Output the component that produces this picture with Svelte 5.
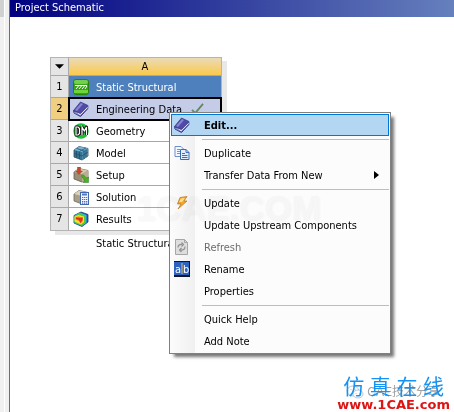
<script lang="ts">
  type Cell = { name: string; icon: string };
  type Entry = { label: string; icon?: string; disabled?: boolean; submenu?: boolean; active?: boolean };

  const cells: Cell[] = [
    { name: 'Static Structural', icon: 'static' },
    { name: 'Engineering Data', icon: 'book' },
    { name: 'Geometry', icon: 'dm' },
    { name: 'Model', icon: 'model' },
    { name: 'Setup', icon: 'setup' },
    { name: 'Solution', icon: 'solution' },
    { name: 'Results', icon: 'results' },
  ];

  const groups: Entry[][] = [
    [{ label: 'Edit...', icon: 'book', active: true }],
    [{ label: 'Duplicate', icon: 'copy' }, { label: 'Transfer Data From New', submenu: true }],
    [
      { label: 'Update', icon: 'bolt' },
      { label: 'Update Upstream Components' },
      { label: 'Refresh', icon: 'refresh', disabled: true },
      { label: 'Rename', icon: 'rename' },
      { label: 'Properties' },
    ],
    [{ label: 'Quick Help' }, { label: 'Add Note' }],
  ];

  let selected = $state(1);
</script>

{#snippet cube(top: string, left: string, right: string, edge: string)}
  <path d="M1 5 6 1.500 15 3.500 15 11 9 15 1 12z" fill={left} stroke={edge} stroke-width=".8" />
  <path d="M1 5 6 1.500 15 3.500 9 7z" fill={top} />
  <path d="M9 7 15 3.500 15 11 9 15z" fill={right} />
{/snippet}

{#snippet icon(name: string)}
  <svg class="icon" viewBox="0 0 16 16" aria-hidden="true">
    {#if name === 'static'}
      <rect x=".5" y=".5" width="15" height="15" rx="2.500" fill="#36a318" stroke="#26830f" />
      <rect x="1" y="1" width="14" height="4" rx="2" fill="#74cf4e" />
      <rect x="1" y="11" width="14" height="3" fill="#6fd43a" />
      <path d="M2 6.500h12" stroke="#fff" />
      <path d="M5.500 7 3 10M8.500 7 6 10M11.500 7 9 10M14 7 12 10" stroke="#fff" fill="none" />
    {:else if name === 'book'}
      <path d="M1 10 7 15 15 7 15 5 7 12z" fill="#dcdff0" stroke="#4a4793" stroke-width=".7" />
      <path d="M.5 9.500 7.500 1 15 4.500 7.500 12.500z" fill="#504ba8" stroke="#36318a" stroke-width=".7" />
      <path d="M2 9 8 2 10 3 4 10z" fill="#8986d0" />
      <path d="M.5 9.500 1 12 7.500 15.500 15 7.500" fill="none" stroke="#39358a" />
    {:else if name === 'dm'}
      <circle cx="8" cy="8" r="7.700" fill="#20bd3a" />
      <path d="M3 4h2l1.500 1.500v5L5 12H3zM9 12V4l2.300 4L13.500 4v8" fill="none" stroke="#111" stroke-width="3" stroke-linejoin="round" />
      <path d="M3 4h2l1.500 1.500v5L5 12H3zM9 12V4l2.300 4L13.500 4v8" fill="none" stroke="#fff" stroke-width="1.200" />
    {:else if name === 'model'}
      {@render cube('#77b4d2', '#37718f', '#4c8cac', '#244f68')}
      <path d="M1 8.500 9 11 15 7M3.500 6v7M6.500 6.500V14M11 6v8M13 4.500V12M3.500 3.500 11.500 6M7 6 13 3" fill="none" stroke="#204a63" stroke-width=".7" />
    {:else if name === 'setup'}
      {@render cube('#d5ccb0', '#988f76', '#b9ae8f', '#655e4d')}
      <path d="M4.500 0h3v4h2L6 7.500 2.500 4h2z" fill="#c9482b" stroke="#8e3524" stroke-width=".4" />
      <path d="m8.500 9 1.500-1.500 3.500 3.500 2-1v5.500H10l1.500-2z" fill="#4fae27" stroke="#267416" stroke-width=".5" />
    {:else if name === 'solution'}
      {@render cube('#d9d2b9', '#a79f87', '#b9ae8f', '#706b5a')}
      <rect x="7.500" y="3.500" width="8" height="12" fill="#f2f5ff" stroke="#4268ad" />
      <path d="M9 5.500h5" stroke="#5379bf" stroke-width="2" />
      <path d="M9 8.500h5.500M9 10.500h5.500M9 12.500h5.500M9 14.200h5.500" stroke="#4871b8" stroke-width="1.200" stroke-dasharray="1.300 .7" />
    {:else if name === 'results'}
      <path d="M1 4.500 8 1 15 3.500V11l-6 4.500L1 12z" fill="#254fd0" stroke="#243c66" stroke-width=".8" />
      <path d="M1.500 4.500 7 1.500 13.500 4v7.500L9 15l-7.500-3z" fill="#24c3c6" />
      <path d="M1.500 5 6 2.500 12 4.500v7.500L8.500 14.500l-7-3z" fill="#4fcf35" />
      <path d="M1.500 5.500 5.500 4 11 5.500V11l-3 2.500-6.500-3z" fill="#f6e225" />
      <path d="M2.500 6 6 5.500l4 1v3.500L7.500 12.500 6 10 2.500 8.500z" fill="#f0801f" />
      <path d="M3 6.500 7 7l2.500-.5v2L7.500 12 6 9 3 8z" fill="#e0301c" />
    {:else if name === 'copy'}
      <path d="M1 1.500h6l2.500 2.500v7.500H1z" fill="#f5f8ff" stroke="#6d91c9" />
      <path d="M3 4.500h3M3 6.500h4M3 8.500h4" stroke="#6c94cf" />
      <path d="M6.500 4.500h5.500l3 3v7H6.500z" fill="#e2edff" stroke="#3c68ac" />
      <path d="M12 4.500v3h3M8 8.500h3M8 10.500h5.500M8 12.500h5.500" fill="none" stroke="#3c70bd" />
    {:else if name === 'bolt'}
      <path d="M6 2.500 13 1.500 10 6h3L4 14l3-5H3.500z" fill="#f6a623" stroke="#ba7424" stroke-width=".7" />
      <path d="M7 3.500 11 3 8 7H5z" fill="#ffe18a" />
    {:else if name === 'refresh'}
      <path d="M1.500.5h9l3 3v12h-12z" fill="#dedede" stroke="#a6a6a6" />
      <path d="M10.500.5v3h3" fill="none" stroke="#a6a6a6" />
      <path d="M4 8.500C4 6 6 5 8.500 5.500M7.500 3.500l2 2-2 2M11 7.500c0 3-2 4-4.500 3.500M7.500 9l-2 2 2 2" fill="none" stroke="#929292" stroke-width="1.200" />
    {:else if name === 'rename'}
      <rect width="16" height="16" fill="#101828" />
      <rect y="1" width="15" height="13" fill="#2c62c0" />
      <path d="M8 2v11" stroke="#f4bd49" />
      <text class="glyph" x="1" y="12">a</text>
      <text class="glyph" x="9" y="12">b</text>
    {/if}
  </svg>
{/snippet}

<main class="workspace">
  <div class="side"></div>
  <section class="panel">
    <h1 class="title">Project Schematic</h1>

    <div class="canvas">
      <div class="system">
        <table class="block">
          <thead>
            <tr>
              <th class="corner"><button class="toggle" aria-label="System menu"><svg viewBox="0 0 10 6"><path d="M0 0h10L5 5z" /></svg></button></th>
              <th class="column">A</th>
            </tr>
          </thead>
          <tbody>
            {#each cells as cell, i}
              <tr class:heading={i === 0} class:selected={i === selected} onclick={() => (selected = i)}>
                <th class="number">{i + 1}</th>
                <td>
                  <div class="cell">
                    {@render icon(cell.icon)}
                    <span>{cell.name}</span>
                    {#if i === 1}
                      <svg class="check" viewBox="0 0 14 12"><path d="M1 7.500 4.500 11 13 1" /></svg>
                      <svg class="corner-mark" viewBox="0 0 4 4"><path d="M4 0v4H0z" /></svg>
                    {/if}
                  </div>
                </td>
              </tr>
            {/each}
          </tbody>
        </table>
        <p class="caption">Static Structural</p>
      </div>
    </div>
  </section>

  <div class="menu" role="menu">
    {#each groups as group, g}
      {#if g > 0}<hr />{/if}
      {#each group as entry}
        <button class="entry" class:active={entry.active} role="menuitem" disabled={entry.disabled}>
          <span class="slot">{#if entry.icon}{@render icon(entry.icon)}{/if}</span>
          <span class="label">{entry.label}</span>
          {#if entry.submenu}<svg class="arrow" viewBox="0 0 5 8"><path d="M0 0v8l5-4z" /></svg>{/if}
        </button>
      {/each}
    {/each}
  </div>

  <div class="watermark">1CAE.COM</div>
  <div class="brand">
    <span class="account">
      <svg viewBox="0 0 18 14"><ellipse cx="7" cy="6" rx="6" ry="5" /><ellipse cx="12" cy="9" rx="5" ry="4" /><path d="M5 4v1M9 4v1M10 8v1M14 8v1" /></svg>
      CAE技术分享
    </span>
    <span class="brand-name">
      {#each '仿真在线' as char}<span>{char}</span>{/each}
    </span>
    <span class="brand-url">www.1CAE.com</span>
  </div>
</main>

<style>
  :global(body) {
    margin: 0;
    background: #fff;
  }

  .workspace {
    position: relative;
    display: flex;
    min-height: 100vh;
    overflow: hidden;
    font-family: Tahoma, 'DejaVu Sans Condensed', 'DejaVu Sans', sans-serif;
    font-size: 11px;
    line-height: 14px;
    color: #000;
  }

  .side {
    flex: none;
    width: 4px;
    border-right: 1px solid #fff;
    background: linear-gradient(#d0d0d0 17px, #f0f0f0 17px);
  }

  .panel {
    flex: 1;
    margin-left: 4px;
    border-left: 1px solid #6e6e6e;
    box-shadow: -4px 0 #f0f0f0;
  }

  .title {
    margin: 0;
    padding: 0 5px 1px;
    background: linear-gradient(90deg, #000080, #6680bd);
    color: #fff;
    font-size: 11px;
    font-weight: normal;
    line-height: 16px;
  }

  .canvas {
    padding: 40px;
  }

  .system {
    width: 172px;
  }

  .block {
    width: 100%;
    border: 1px solid #b4b4b4;
    border-collapse: separate;
    border-spacing: 0;
    box-shadow: 5px 4px #e8e8e8;
  }

  .block th,
  .block td {
    box-sizing: border-box;
    height: 22px;
    padding: 0;
    border-bottom: 1px solid #a8a8a8;
    background: #fff;
    font-weight: normal;
    text-align: center;
  }

  .block thead th {
    height: 18px;
  }

  .block tbody tr:last-child .number,
  .block tbody tr:last-child td {
    border-bottom: 0;
  }

  .block .number,
  .block .corner {
    width: 18px;
    border-right: 1px solid #a8a8a8;
    background: #e5e5e5;
  }

  .block .column {
    background: linear-gradient(#eadbb8, #fbc94b);
  }

  .toggle {
    display: block;
    width: 100%;
    padding: 0 4px;
    border: 0;
    background: none;
  }

  .toggle svg {
    display: block;
    width: 9px;
    height: 6px;
  }

  .cell {
    position: relative;
    display: flex;
    align-items: center;
    height: 21px;
    padding-left: 4px;
    text-align: left;
  }

  .cell span {
    padding: 2px 0 0 7px;
  }

  .icon {
    flex: none;
    display: block;
    width: 16px;
    height: 16px;
  }

  .block .heading td {
    background: #4d80bc;
    color: #fff;
  }

  .block .selected td {
    background: #c4cce8;
    outline: 2px solid #000;
    outline-offset: -1px;
  }

  .block .selected .number {
    background: #f0d080;
  }

  .check {
    width: 13px;
    height: 11px;
    margin-left: 9px;
    fill: none;
    stroke: #5f8a62;
    stroke-width: 2;
  }

  .corner-mark {
    position: absolute;
    right: 3px;
    bottom: 3px;
    width: 4px;
    height: 4px;
    fill: #0018e0;
  }

  .caption {
    margin: 6px 0 0 46px;
  }

  .menu {
    position: absolute;
    top: 112px;
    left: 169px;
    box-sizing: border-box;
    width: 222px;
    padding: 1px;
    border: 1px solid #808080;
    background: linear-gradient(90deg, #fcfcfc, #f0f0f0 25px, #fcfcfc 25px);
    box-shadow: 4px 4px 3px -1px #777;
  }

  .entry {
    display: flex;
    align-items: center;
    box-sizing: border-box;
    width: 100%;
    height: 22px;
    padding: 0 9px 0 2px;
    border: 1px solid transparent;
    background: none;
    color: #000;
    font: inherit;
    text-align: left;
  }

  .entry.active {
    border-color: #0078d7;
    background: #b3d7f3;
    font-weight: bold;
  }

  .entry:disabled {
    color: #6d6d6d;
  }

  .slot {
    width: 30px;
  }

  .label {
    flex: 1;
    padding-top: 2px;
  }

  .arrow {
    width: 5px;
    height: 8px;
  }

  hr {
    height: 1px;
    margin: 3px 0 2px 31px;
    border: 0;
    background: #bdbdbd;
  }

  .glyph {
    fill: #fff;
    font-size: 11px;
  }

  .watermark {
    position: absolute;
    top: 189px;
    left: 136px;
    color: #f9f9f9;
    font: bold 35px/38px 'Liberation Sans', sans-serif;
    text-shadow: 1px 1px 3px #f4f4f4;
    mix-blend-mode: multiply;
    pointer-events: none;
  }

  .brand {
    position: absolute;
    right: 4px;
    bottom: 0;
    display: grid;
  }

  .brand-name {
    display: flex;
    justify-content: space-between;
    padding: 0 6px;
    color: #1493f5;
    font: 21px/24px 'KaiTi', 'Noto Sans CJK SC', sans-serif;
    z-index: 1;
  }

  .brand-url {
    color: #dc1515;
    font: bold 13px/15px 'DejaVu Sans', sans-serif;
    z-index: 1;
  }

  .account {
    position: absolute;
    right: 10px;
    bottom: 12px;
    display: flex;
    align-items: center;
    gap: 3px;
    color: #a0a0a0;
    font: 12px/16px 'Liberation Sans', 'Noto Sans CJK SC', sans-serif;
    white-space: nowrap;
  }

  .account svg {
    width: 18px;
    height: 14px;
    fill: #fff;
    stroke: #c4c4c4;
  }
</style>
